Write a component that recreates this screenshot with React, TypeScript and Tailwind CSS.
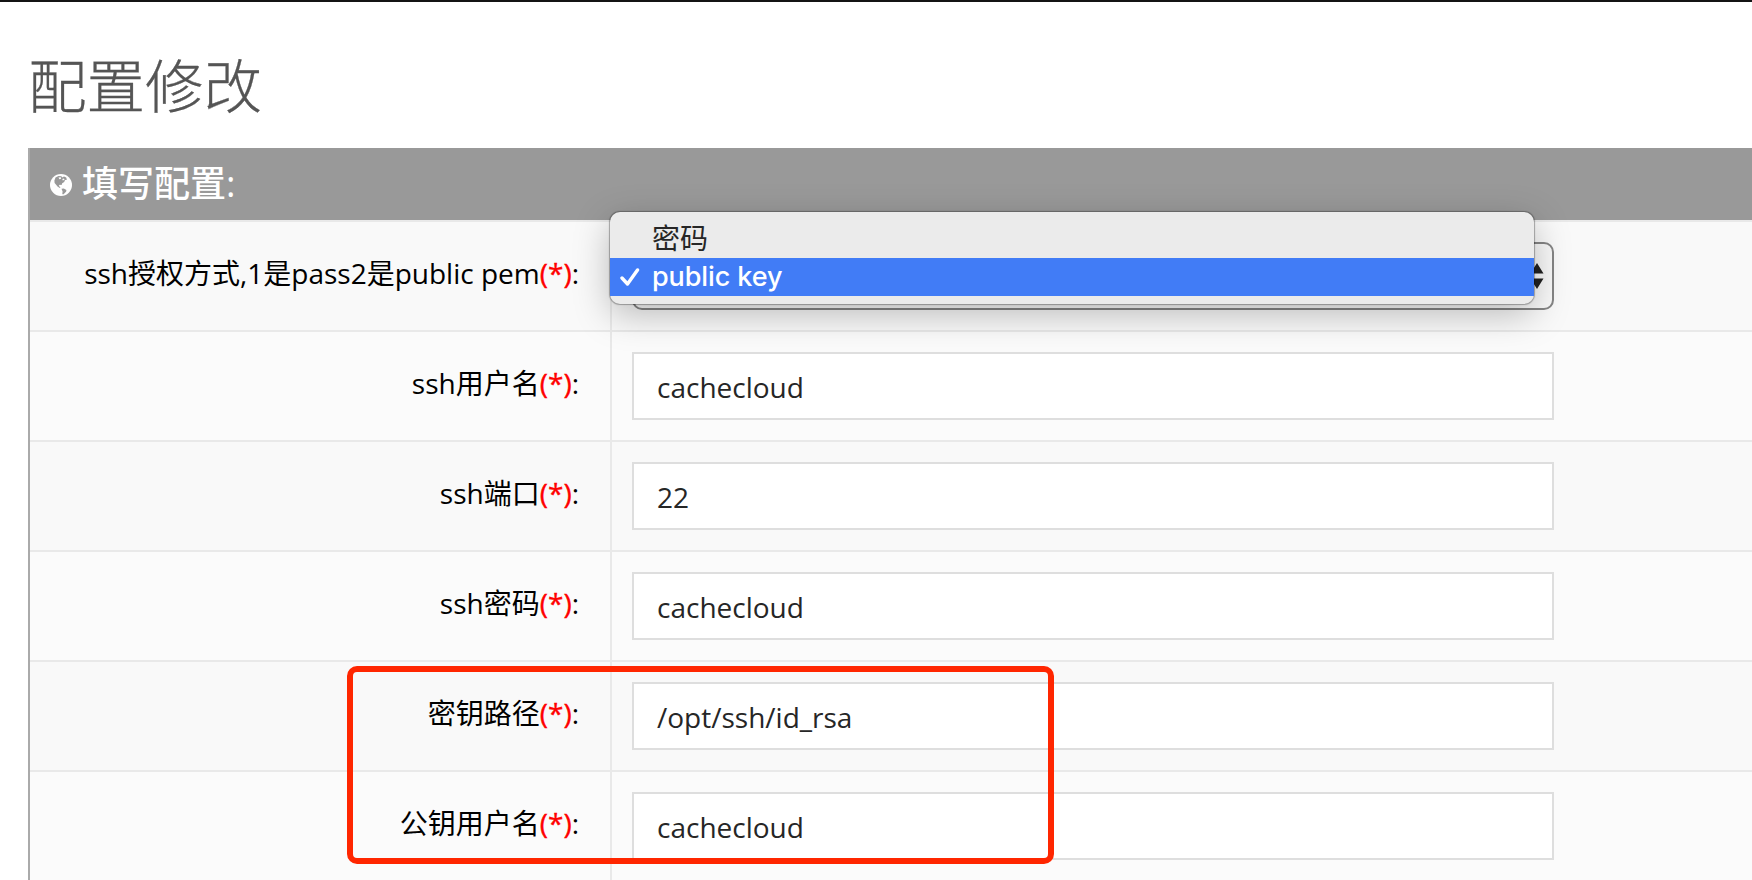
const rows = [
  { label: "ssh授权方式,1是pass2是public pem", value: null },
  { label: "ssh用户名", value: "cachecloud" },
  { label: "ssh端口", value: "22" },
  { label: "ssh密码", value: "cachecloud" },
  { label: "密钥路径", value: "/opt/ssh/id_rsa" },
  { label: "公钥用户名", value: "cachecloud" },
];

function GlobeIcon() {
  return (
    <svg className="mt-px" width="22" height="22" viewBox="0 0 22 22">
      <circle cx="11" cy="11" r="11" fill="white" />
      <path
        fill="#999"
        d="M5.500 3.500L8.500 2l3 .3.500 1.200 2-.9 2.200 1 .7 2.200-1.900.3-.8 1.900-2 1.200-.6 1.800-2-.2-.9 1.200 1.200.8.500 1.100-1-.1-1.900-1.300-1.600-1.900L4.600 9 4.400 6.500z"
      />
      <path fill="#999" d="M11.500 14.700l2.300-.1 2.600 1.500-.2 1.400-1.600 1.700-1.500 1.300-.8-.5.300-2.500z" />
      <path fill="white" d="M8.500 3.600l2.300-.3.300 1.400-1.700.5zM12.300 5l1.700-.4.500 1.200-1.700.8z" />
    </svg>
  );
}

function SelectField() {
  return (
    <div className="relative h-[68px] w-[922px]">
      <div className="flex h-full items-center justify-end rounded-[10px] border-2 border-[#858585] bg-[#f9f9f9] pr-2">
        <svg width="14" height="26" viewBox="0 0 14 26" fill="#222">
          <path d="M7 0L13.5 10.5H.5zM7 26L.5 15.5h13z" />
        </svg>
      </div>
      <div className="absolute -left-[22px] -top-[30px] h-[92px] w-[924px] rounded-[10px] bg-[#ebebeb] pt-2 font-['Inter','Noto_Sans_CJK_SC',sans-serif] text-[26px] shadow-[0_0_1px_1px_rgba(0,0,0,0.3),0_10px_36px_rgba(0,0,0,0.26)]">
        <div className="flex h-[38px] items-center pl-[42px] text-[28px] text-[#262626]">密码</div>
        <div className="flex h-[38px] items-center bg-[#417cf6] pl-[10px] text-white">
          <svg className="mr-[12px]" width="20" height="18" viewBox="0 0 20 18" fill="none" stroke="white" strokeWidth="3.4" strokeLinecap="round" strokeLinejoin="round">
            <path d="M2 10l5.500 6L17.500 2" />
          </svg>
          <span className="text-[27px] font-[450] tracking-[-0.1px]">public key</span>
        </div>
      </div>
    </div>
  );
}

export default function App() {
  return (
    <div className="relative h-[880px] w-full overflow-hidden border-t-2 border-[#141414] bg-white font-['Open_Sans','Noto_Sans_CJK_SC',sans-serif]">
      <h1 className="ml-[28px] flex h-[146px] items-center pt-[17px] font-['Noto_Sans_CJK_SC',sans-serif] text-[58.500px] font-[300] leading-none text-[#555] [-webkit-text-stroke:0.3px_#555]">
        配置修改
      </h1>
      <div className="ml-[28px] border-l-2 border-[#aaa]">
        <div className="flex h-[72px] items-center bg-[#999] pl-[20px] text-white">
          <GlobeIcon />
          <span className="ml-[10px] text-[36px] font-medium leading-none">填写配置:</span>
        </div>
        {rows.map((row) => (
          <div key={row.label} className="flex h-[110px] border-t-2 border-[#e9e9e9] odd:bg-[#fbfbfb] even:bg-[#f9f9f9]">
            <div className="w-[580px] shrink-0 pr-[31px] pt-[31px] text-right text-[28px] leading-[40px] text-black">
              {row.label}
              <span className="text-[#f00] [-webkit-text-stroke:0.4px_#f00]">(*)</span>:
            </div>
            <div className="flex-1 border-l-2 border-[#e9e9e9] pl-[20px] pt-[20px]">
              {row.value === null ? (
                <SelectField />
              ) : (
                <div className="flex h-[68px] w-[922px] items-center border-2 border-[#dedede] bg-white pl-[23px] pt-px text-[28px] leading-none text-[#262626]">
                  {row.value}
                </div>
              )}
            </div>
          </div>
        ))}
      </div>
      <div className="pointer-events-none absolute left-[347px] top-[664px] h-[198px] w-[707px] rounded-[10px] border-[6px] border-[#ff2600]" />
    </div>
  );
}
